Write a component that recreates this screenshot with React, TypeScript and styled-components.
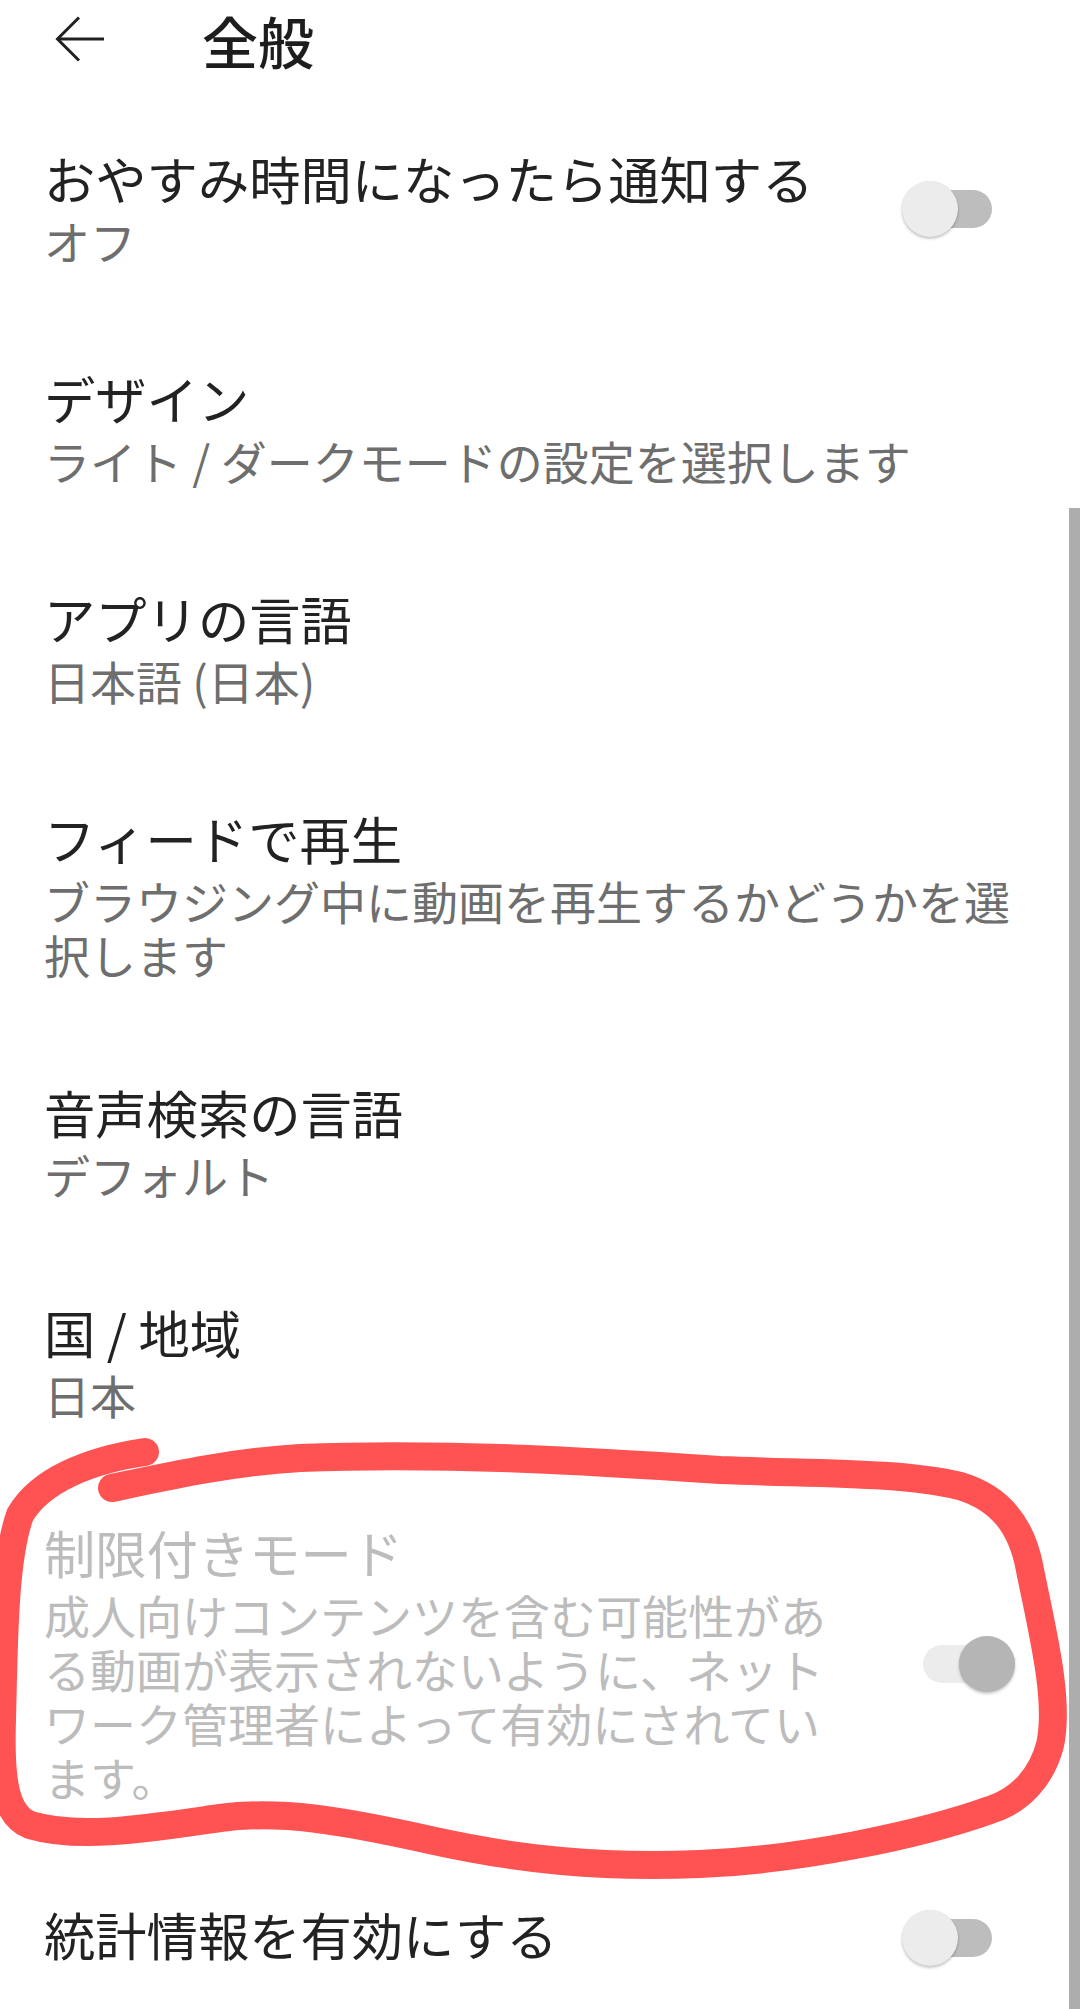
import React from 'react';
import styled, { createGlobalStyle } from 'styled-components';

const GlobalStyle = createGlobalStyle`
  html, body {
    margin: 0;
    padding: 0;
    background: #ffffff;
  }
  body {
    font-family: "Noto Sans CJK JP", "Noto Sans", Roboto, sans-serif;
  }
`;

type Setting = {
  title: string;
  sub?: string;
  toggle?: 'off' | 'locked';
  inset?: number;
  disabled?: boolean;
};

const settings: Setting[] = [
  { title: 'おやすみ時間になったら通知する', sub: 'オフ', toggle: 'off', inset: 86 },
  { title: 'デザイン', sub: 'ライト / ダークモードの設定を選択します' },
  { title: 'アプリの言語', sub: '日本語 (日本)' },
  { title: 'フィードで再生', sub: 'ブラウジング中に動画を再生するかどうかを選択します' },
  { title: '音声検索の言語', sub: 'デフォルト' },
  { title: '国 / 地域', sub: '日本' },
  {
    title: '制限付きモード',
    sub: '成人向けコンテンツを含む可能性がある動画が表示されないように、ネットワーク管理者によって有効にされています。',
    toggle: 'locked',
    inset: 65,
    disabled: true,
  },
  { title: '統計情報を有効にする', toggle: 'off', inset: 86 },
];

const Page = styled.div`
  position: relative;
  width: 1080px;
  height: 2009px;
  overflow: hidden;
  background: #ffffff;
`;

const Header = styled.header`
  display: flex;
  align-items: center;
  height: 82px;
  padding-left: 55px;
`;

const BackButton = styled.button`
  display: flex;
  align-items: center;
  justify-content: center;
  width: 50px;
  height: 46px;
  margin-top: -4px;
  padding: 0;
  border: none;
  background: none;
  color: #212121;
`;

const HeaderTitle = styled.h1`
  margin: -2px 0 0 97px;
  font-size: 56px;
  line-height: 82px;
  font-weight: 500;
  color: #1d1d1d;
`;

const List = styled.div`
  padding-top: 13px;
`;

const Row = styled.div`
  display: flex;
  align-items: center;
  padding: 48px 45px 48px 44px;
`;

const Texts = styled.div`
  flex: 1;
  min-width: 0;
`;

const Title = styled.div<{ $disabled?: boolean }>`
  font-size: 51.3px;
  line-height: 70px;
  color: ${p => (p.$disabled ? '#bcbcbc' : '#222222')};
`;

const Sub = styled.div<{ $disabled?: boolean }>`
  font-size: 46px;
  line-height: 54px;
  color: ${p => (p.$disabled ? '#bcbcbc' : '#6e6e6e')};
`;

const SwitchBox = styled.div<{ $inset: number }>`
  position: relative;
  flex: none;
  width: 92px;
  height: 56px;
  margin: 8px ${p => p.$inset - 45}px 0 70px;
`;

const Track = styled.div<{ $on: boolean }>`
  position: absolute;
  top: 9px;
  left: ${p => (p.$on ? '0' : '2px')};
  width: 88px;
  height: 38px;
  border-radius: 19px;
  background: ${p => (p.$on ? '#ececec' : '#bdbdbd')};
`;

const Knob = styled.div<{ $on: boolean }>`
  position: absolute;
  top: 0;
  left: ${p => (p.$on ? '36px' : '0')};
  width: 56px;
  height: 56px;
  border-radius: 50%;
  background: ${p => (p.$on ? '#b5b5b5' : '#ececec')};
  box-shadow: 0 2px 3px rgba(0, 0, 0, 0.22), 0 0 1px rgba(0, 0, 0, 0.1);
`;

const ScrollThumb = styled.div`
  position: absolute;
  top: 508px;
  right: 0;
  width: 11px;
  height: 1501px;
  background: #adadad;
`;

const Annotation = styled.svg`
  position: absolute;
  inset: 0;
  width: 1080px;
  height: 2009px;
  pointer-events: none;
`;

const BackArrow = () => (
  <svg width="50" height="46" viewBox="0 0 50 46" fill="none" stroke="currentColor" strokeWidth="3">
    <path d="M49 23H3" />
    <path d="M24 1.5L2.5 23L24 44.5" />
  </svg>
);

const Switch: React.FC<{ on: boolean; inset: number }> = ({ on, inset }) => (
  <SwitchBox $inset={inset}>
    <Track $on={on} />
    <Knob $on={on} />
  </SwitchBox>
);

const App: React.FC = () => (
  <Page>
    <GlobalStyle />
    <Header>
      <BackButton aria-label="戻る">
        <BackArrow />
      </BackButton>
      <HeaderTitle>全般</HeaderTitle>
    </Header>
    <List>
      {settings.map(s => (
        <Row key={s.title}>
          <Texts>
            <Title $disabled={s.disabled}>{s.title}</Title>
            {s.sub ? <Sub $disabled={s.disabled}>{s.sub}</Sub> : null}
          </Texts>
          {s.toggle ? <Switch on={s.toggle === 'locked'} inset={s.inset ?? 86} /> : null}
        </Row>
      ))}
    </List>
    <ScrollThumb />
    <Annotation viewBox="0 0 1080 2009">
      <path
        d="M112 1488
           C160 1478 230 1462 300 1458
           C450 1452 600 1462 720 1470
           C820 1474 900 1472 960 1486
           C1000 1498 1022 1525 1030 1570
           C1042 1630 1060 1700 1050 1745
           C1042 1775 1022 1800 990 1810
           C920 1835 800 1860 700 1864
           C600 1868 520 1860 430 1840
           C340 1820 280 1810 220 1818
           C150 1828 80 1840 30 1825
           C5 1815 0 1780 2 1720
           C4 1640 4 1560 20 1515
           C40 1480 90 1460 145 1452"
        fill="none"
        stroke="#ff5252"
        strokeWidth="28"
        strokeLinecap="round"
        strokeLinejoin="round"
      />
    </Annotation>
  </Page>
);

export default App;
